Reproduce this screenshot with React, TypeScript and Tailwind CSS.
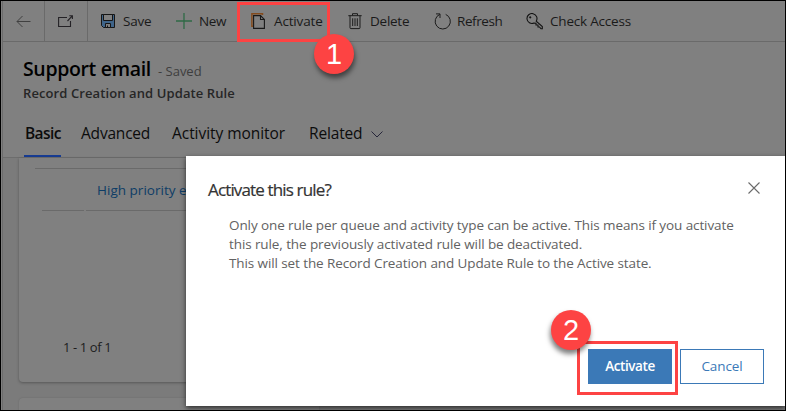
import type { ReactNode } from 'react';

function Command({ className, icon, label, labelClass }: { className: string; icon: ReactNode; label: string; labelClass: string }) {
  return (
    <button className={`flex h-full shrink-0 items-center text-left ${className}`}>
      <span className="flex h-4 w-4 shrink-0 items-center justify-center">{icon}</span>
      <span className={`whitespace-nowrap text-[13.5px] leading-5 text-[#1a1a1a] ${labelClass}`}>{label}</span>
    </button>
  );
}

const BackIcon = () => (
  <svg width="15" height="13" viewBox="0 0 15 13" fill="none" stroke="#404040" strokeWidth="1">
    <path d="M14.5 6.5H1M6.5 1L1 6.5L6.5 12" />
  </svg>
);

const PopOutIcon = () => (
  <svg width="16" height="13" viewBox="0 0 16 13" fill="none" stroke="#242226" strokeWidth="1.1">
    <path d="M9 2.5H.6V11.5H12.5V6M9.5 6L14 1.2M11.3 .8H14.4V4" />
  </svg>
);

const SaveIcon = () => (
  <svg width="16" height="16" viewBox="0 0 16 16" fill="none" stroke="#161616" strokeWidth="1">
    <path d="M1.5 1.5H14.5V14.5H3.5L1.5 12.5Z" fill="#3f6489" />
    <path d="M3.5 1.5V7.5H12.5V1.5Z" fill="#808080" />
    <path d="M5.5 14.5V10.5H10.5V14.5Z" fill="#808080" />
    <path d="M7.5 12.5V14.5" />
  </svg>
);

const PlusIcon = () => (
  <svg width="16" height="16" viewBox="0 0 16 16" stroke="#2f6a45" strokeWidth="1.3">
    <path d="M8 0V16M0 8H16" />
  </svg>
);

const PagesIcon = () => (
  <svg className="shrink-0" width="16" height="16" viewBox="0 0 16 16" fill="none">
    <path d="M2 13.3H.9V.8H11.5V2" stroke="#834a1c" strokeWidth="1.5" />
    <path d="M2.6 2.6H9.5L13.4 6.5V15.4H2.6Z" stroke="#181818" strokeWidth="1.1" />
    <path d="M9.5 2.6V6.5H13.4" stroke="#181818" strokeWidth="1.1" />
  </svg>
);

const TrashIcon = () => (
  <svg width="14" height="17" viewBox="0 0 14 17" fill="none" stroke="#1c1c1c" strokeWidth="1">
    <path d="M.3 2.7H13.7M4.5 2.5V.7H9.5V2.5M2 2.8V14.7Q2 15.6 3 15.6H11Q12 15.6 12 14.7V2.8M4.7 5.3V13M7 5.3V13M9.3 5.3V13" />
  </svg>
);

const RefreshIcon = () => (
  <svg className="shrink-0" width="17" height="17" viewBox="0 0 17 17" fill="none" stroke="#1c1c1c" strokeWidth="1">
    <path d="M11.7 1.4A7.6 7.6 0 1 1 5.8 1.4M2 .9H6V5" />
  </svg>
);

const KeyIcon = () => (
  <svg className="shrink-0" width="17" height="17" viewBox="0 0 17 17" fill="none" stroke="#121212" strokeWidth="1.1">
    <path d="M10.2 8.2A5 5 0 1 0 8 10.1L10 10.2V12H12V14H13.5L15 15.8H16.3V13.6Z" />
    <circle cx="4.2" cy="4.4" r=".8" fill="#121212" strokeWidth=".5" />
  </svg>
);

function Tab({ className, children }: { className: string; children: ReactNode }) {
  return <span className={`shrink-0 whitespace-nowrap text-[15.5px] leading-6 text-[#0c0c0c] ${className}`}>{children}</span>;
}

function Callout({ className, children }: { className: string; children: ReactNode }) {
  return (
    <div className={`absolute flex h-10 w-10 items-center justify-center rounded-full bg-[#fd4343] font-['Liberation_Sans',sans-serif] text-[29px] leading-none text-white ${className}`}>
      {children}
    </div>
  );
}

export default function App() {
  return (
    <div className="relative flex h-[411px] w-[786px] flex-col overflow-hidden border border-black bg-[#808080] font-['Open_Sans','Noto_Sans',sans-serif]">
      <div className="ml-px flex min-h-0 grow flex-col border-l border-[#6c6c6c]">
        <header className="flex h-[41px] shrink-0 border-b border-[#6a6a6a]">
          <div className="flex w-[42px] shrink-0 items-center justify-center border-r border-[#6a6a6a]"><BackIcon /></div>
          <div className="flex w-[43px] shrink-0 items-center justify-center border-r border-[#6a6a6a]"><PopOutIcon /></div>
          <Command className="ml-3 w-[76px]" icon={<SaveIcon />} label="Save" labelClass="ml-[7px] tracking-[-0.25px]" />
          <Command className="w-[75px]" icon={<PlusIcon />} label="New" labelClass="ml-[7px] tracking-[-0.4px]" />
          <Command className="w-[96px]" icon={<PagesIcon />} label="Activate" labelClass="ml-[7px] tracking-[-0.15px]" />
          <Command className="w-[87px]" icon={<TrashIcon />} label="Delete" labelClass="ml-[7px] tracking-[-0.25px]" />
          <Command className="w-[92px]" icon={<RefreshIcon />} label="Refresh" labelClass="ml-[7px] tracking-[-0.4px]" />
          <Command className="" icon={<KeyIcon />} label="Check Access" labelClass="ml-2 tracking-[-0.2px]" />
        </header>

        <section className="flex h-[116px] shrink-0 flex-col border-b border-[#6d6d6d] pl-5">
          <div className="mt-[13px] flex h-7 items-baseline">
            <h1 className="whitespace-nowrap text-[19.5px] font-semibold leading-7 tracking-[-0.35px] text-black">Support email</h1>
            <span className="ml-[7px] whitespace-nowrap text-[13px] leading-5 text-[#3e3e3e]">- Saved</span>
          </div>
          <p className="whitespace-nowrap text-[13px] font-semibold leading-5 tracking-[0.1px] text-[#262626]">Record Creation and Update Rule</p>
          <nav className="mt-auto flex h-9 items-start pl-px">
            <Tab className="h-9 w-[37px] border-b-2 border-[#173b91] pl-px font-semibold tracking-[-0.6px]">Basic</Tab>
            <Tab className="ml-5 w-[91px] tracking-[-0.2px]">Advanced</Tab>
            <Tab className="w-[137px] tracking-[-0.05px]">Activity monitor</Tab>
            <Tab className="w-[62px] tracking-[-0.15px]">Related</Tab>
            <svg className="mt-2.5" width="12" height="7" viewBox="0 0 12 7" fill="none" stroke="#26263a" strokeWidth="1"><path d="M.5 .5L6 6L11.5 .5" /></svg>
          </nav>
        </section>

        <main className="flex min-h-0 grow flex-col bg-[#7b7b7b] pl-4">
          <section className="flex h-[224px] w-[300px] shrink-0 flex-col rounded-b bg-[#808080] shadow-[0_1px_3px_rgba(0,0,0,0.3)]">
            <div className="ml-4 mt-2.5 h-px shrink-0 bg-[#6a6a6a]" />
            <div className="flex h-[41px] shrink-0 items-center pl-[78px] pt-px">
              <a className="whitespace-nowrap text-[13.5px] leading-5 tracking-[0.02px] text-[#0e3d66]">High priority email</a>
            </div>
            <div className="ml-[23px] flex h-px shrink-0 gap-0.5">
              <span className="w-[42px] bg-[#6a6a6a]" /><span className="grow bg-[#6a6a6a]" />
            </div>
            <p className="mb-[25px] ml-11 mt-auto whitespace-nowrap text-[13px] leading-5 tracking-[-0.4px] text-[#1d1d1d]">1 - 1 of 1</p>
          </section>
          <section className="mt-4 h-20 w-[300px] shrink-0 rounded bg-[#808080] shadow-[0_0_2px_rgba(0,0,0,0.15)]" />
        </main>
      </div>

      <div role="dialog" className="absolute left-[185px] top-[155px] flex h-[250px] w-[599px] flex-col bg-white text-[#626262] shadow-[0_2px_5px_rgba(0,0,0,0.65)]">
        <div className="flex h-[60px] shrink-0 items-start justify-between pl-[22px] pr-[25px] pt-[22px]">
          <h2 className="whitespace-nowrap text-[17px] leading-6 tracking-[-0.85px] text-[#333] [-webkit-text-stroke:0.2px_#333]">Activate this rule?</h2>
          <svg className="mt-1" width="12" height="12" viewBox="0 0 12 12" stroke="#6a6a6a" strokeWidth="1.1"><path d="M.5 .5L11.5 11.5M11.5 .5L.5 11.5" /></svg>
        </div>
        <div className="ml-[43px] whitespace-nowrap text-[13.5px] leading-[19px] tracking-[-0.1px]">
          <p>Only one rule per queue and activity type can be active. This means if you activate</p>
          <p>this rule, the previously activated rule will be deactivated.</p>
          <p className="leading-[18px]">This will set the Record Creation and Update Rule to the Active state.</p>
        </div>
        <div className="mb-[22px] mr-[21px] mt-auto flex justify-end gap-2">
          <button className="h-[35px] w-[84px] bg-[#3b79b7] text-[13.5px] font-semibold tracking-[-0.4px] text-white">Activate</button>
          <button className="h-[35px] w-[84px] border border-[#3b79b7] text-[13.5px] tracking-[-0.1px] text-[#3b79b7]">Cancel</button>
        </div>
      </div>

      <div className="absolute left-[236px] top-px h-10 w-[93px] border-3 border-[#fd4343]" />
      <div className="absolute left-[576px] top-[340px] h-[54px] w-[101px] border-3 border-[#fd4343]" />
      <Callout className="left-[313px] top-[33px] shadow-[1px_4px_5px_rgba(0,0,0,0.5)]">1</Callout>
      <Callout className="left-[550px] top-[309px] shadow-[-1px_4px_5px_rgba(0,0,0,0.5)]">2</Callout>
    </div>
  );
}
